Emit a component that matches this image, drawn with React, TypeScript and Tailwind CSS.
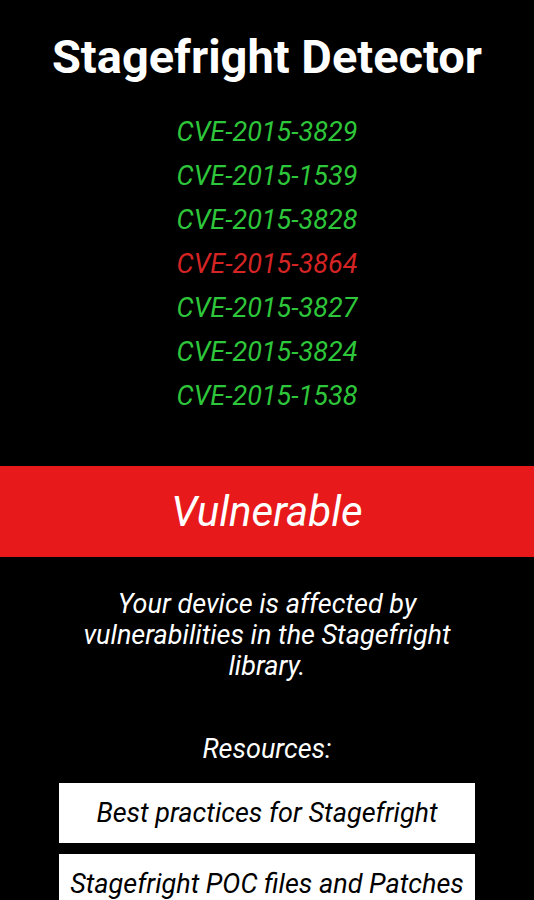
import React from "react";

const cves: { id: string; bad: boolean }[] = [
  { id: "CVE-2015-3829", bad: false },
  { id: "CVE-2015-1539", bad: false },
  { id: "CVE-2015-3828", bad: false },
  { id: "CVE-2015-3864", bad: true },
  { id: "CVE-2015-3827", bad: false },
  { id: "CVE-2015-3824", bad: false },
  { id: "CVE-2015-1538", bad: false },
];

const App: React.FC = () => {
  return (
    <div className="min-h-screen bg-black flex flex-col items-center font-['Roboto',sans-serif]">
      <h1 className="mt-[33px] text-[47px] leading-none font-bold text-white">Stagefright Detector</h1>

      <ul className="mt-[30px] flex flex-col items-center">
        {cves.map((c) => (
          <li
            key={c.id}
            className={`text-[27px] leading-[44px] italic ${c.bad ? "text-[#d42424]" : "text-[#2ec63a]"}`}
          >
            {c.id}
          </li>
        ))}
      </ul>

      <div className="mt-[48px] w-full h-[91px] shrink-0 bg-[#e8191a] flex items-center justify-center">
        <span className="text-[42px] italic text-white">Vulnerable</span>
      </div>

      <p className="mt-[32px] px-[60px] text-center text-[27px] leading-[31px] italic text-white">
        Your device is affected by vulnerabilities in the Stagefright library.
      </p>

      <p className="mt-[52px] text-[27px] leading-[31px] italic text-white">Resources:</p>

      <div className="mt-[18px] flex flex-col gap-[11px]">
        <button className="w-[416px] h-[60px] bg-white text-black text-[27px] italic">
          Best practices for Stagefright
        </button>
        <button className="w-[416px] h-[60px] bg-white text-black text-[27px] italic">
          Stagefright POC files and Patches
        </button>
      </div>
    </div>
  );
};

export default App;
